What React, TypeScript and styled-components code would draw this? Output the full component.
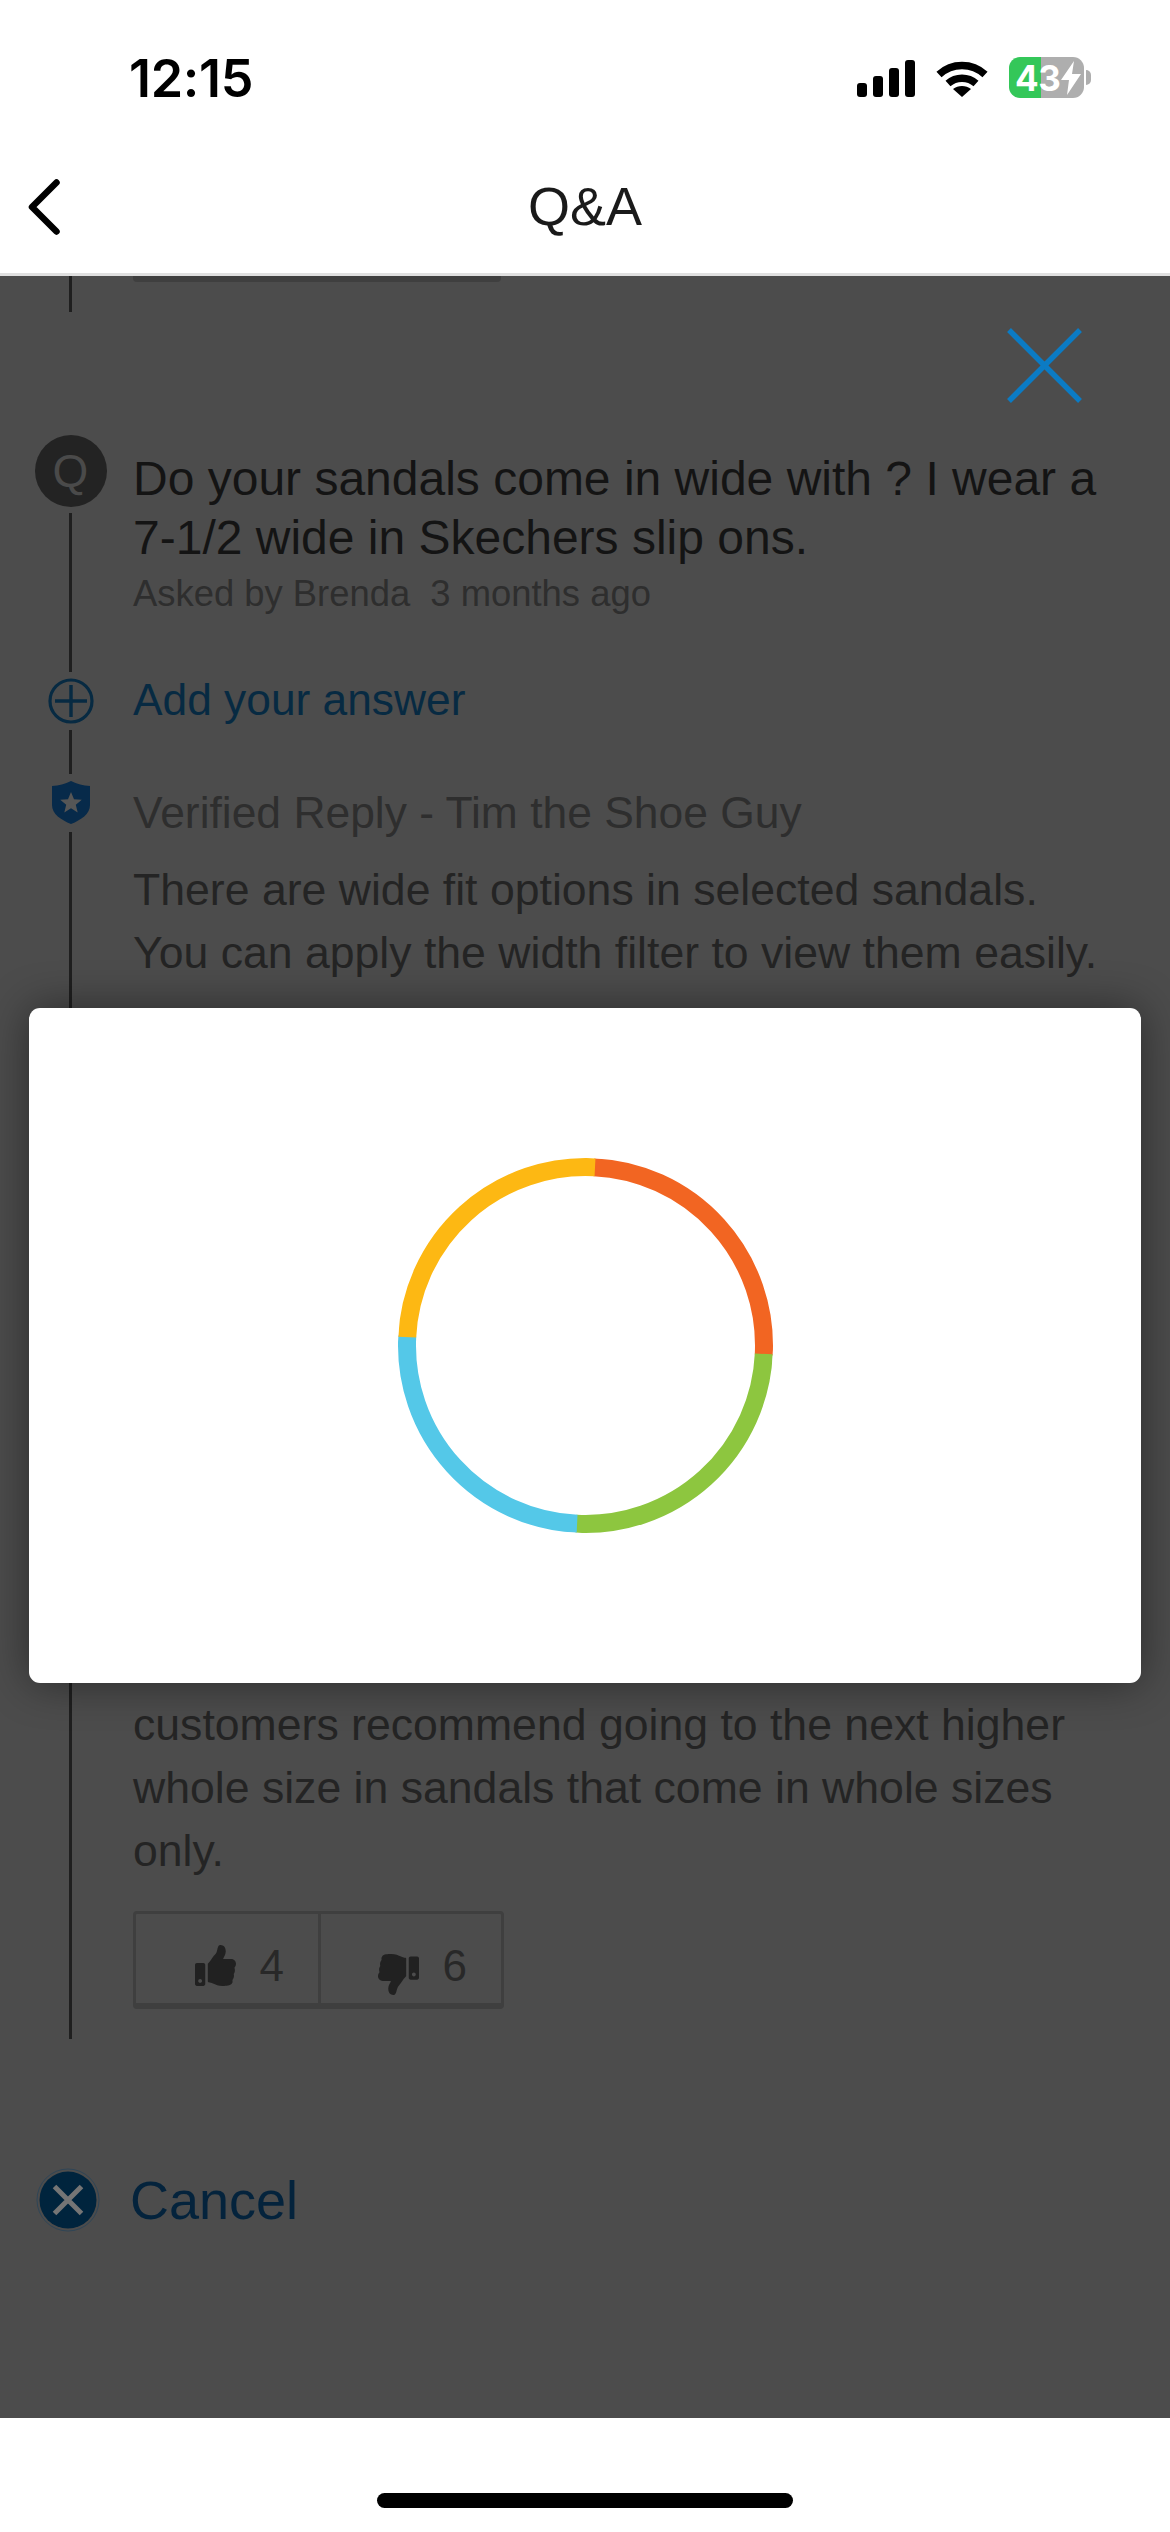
import React from 'react'
import styled, { createGlobalStyle } from 'styled-components'
import { FaThumbsUp, FaThumbsDown } from 'react-icons/fa'

const GlobalStyle = createGlobalStyle`
	html, body {
		margin: 0;
		padding: 0;
		background: white;
	}
	* {
		box-sizing: border-box;
	}
`

const Screen = styled.div`
	width: 1170px;
	height: 2532px;
	display: flex;
	flex-direction: column;
	overflow: hidden;
	font-family: "Liberation Sans", Arial, sans-serif;
`

const StatusBar = styled.div`
	height: 150px;
	padding: 57px 86px 0 129px;
	display: flex;
	justify-content: space-between;
	align-items: flex-start;
	background: white;
`

const Clock = styled.div`
	font-family: Inter, sans-serif;
	font-size: 52px;
	line-height: 44px;
	font-weight: 600;
	letter-spacing: -0.3px;
	color: black;
`

const StatusIcons = styled.div`
	display: flex;
	align-items: center;
	gap: 21px;
`

const Signal = styled.div`
	display: flex;
	align-items: flex-end;
	gap: 6px;
	height: 37px;
	margin-top: 2px;
`

const SignalBar = styled.span<{ $height: number }>`
	width: 10px;
	height: ${p => p.$height}px;
	border-radius: 3px;
	background: black;
`

const Battery = styled.div`
	position: relative;
	width: 75px;
	height: 41px;
	border-radius: 11px;
	background: linear-gradient(90deg, #34c759 0 32px, #aeaeae 32px);
	display: flex;
	align-items: center;
	padding-left: 6px;
	color: white;
	font-family: Inter, sans-serif;
	font-weight: 700;
	font-size: 35px;
	letter-spacing: -0.5px;

	&::after {
		content: '';
		position: absolute;
		left: 77px;
		top: 13px;
		width: 5px;
		height: 15px;
		border-radius: 0 5px 5px 0;
		background: #aeaeae;
	}
`

const NavBar = styled.div`
	position: relative;
	height: 126px;
	display: flex;
	align-items: flex-start;
	justify-content: center;
	padding-top: 25px;
	background: white;
	border-bottom: 3px solid #e0e0e0;
`

const NavTitle = styled.div`
	font-size: 54px;
	line-height: 62px;
	color: #1a1a1a;
`

const BackButton = styled.svg`
	position: absolute;
	left: 24px;
	top: 27px;
`

const Panel = styled.div`
	position: relative;
	height: 2142px;
	background: #4c4c4c;
`

const Row = styled.div<{ $top?: number }>`
	display: flex;
	margin-top: ${p => p.$top ?? 0}px;
`

const Rail = styled.div<{ $height?: number }>`
	flex: none;
	width: 133px;
	padding-left: 8px;
	display: flex;
	flex-direction: column;
	align-items: center;
	height: ${p => (p.$height ? `${p.$height}px` : 'auto')};
`

const RailLine = styled.div<{ $gap?: number }>`
	flex: 1;
	width: 2.5px;
	margin-top: ${p => p.$gap ?? 0}px;
	background: #1f1f1f;
`

const QuestionBadge = styled.div`
	flex: none;
	width: 72px;
	height: 72px;
	border-radius: 50%;
	background: #232323;
	color: #4a4a4a;
	font-size: 46px;
	line-height: 72px;
	text-align: center;
`

const Copy = styled.div<{ $top?: number }>`
	flex: 1;
	padding-top: ${p => p.$top ?? 0}px;
`

const Question = styled.div`
	font-size: 48px;
	line-height: 59px;
	color: #141414;
	white-space: pre;
`

const Meta = styled.div`
	margin-top: 5px;
	font-size: 36.4px;
	line-height: 44px;
	color: #2e2e2e;
	white-space: pre;
`

const AddLink = styled.div`
	margin-top: -3px;
	font-size: 44.3px;
	line-height: 50px;
	color: #072a42;
`

const ReplyAuthor = styled.div`
	font-size: 44.4px;
	line-height: 50px;
	color: #2e2e2e;
`

const Answer = styled.p<{ $top?: number }>`
	margin: ${p => p.$top ?? 0}px 0 0;
	font-size: 44.6px;
	line-height: 63px;
	color: #242424;
	white-space: pre;
`

const Votes = styled.div`
	display: flex;
	width: 371px;
	height: 98px;
	margin-top: 29px;
	margin-bottom: 30px;
	border: 3px solid #3f3f3f;
	border-bottom-width: 6px;
	border-radius: 4px;
`

const VoteButton = styled.div<{ $divided?: boolean; $width: number }>`
	flex: none;
	width: ${p => p.$width}px;
	display: flex;
	justify-content: flex-end;
	align-items: center;
	gap: 24px;
	padding-right: 34px;
	padding-top: 14px;
	border-right: ${p => (p.$divided ? '3px solid #3f3f3f' : 'none')};
	color: #282828;
	font-size: 44px;

	svg {
		width: 41px;
		height: 41px;
		color: #212121;
	}
`

const ThumbSlot = styled.span<{ $shift: number; $flip?: boolean }>`
	display: flex;
	margin-top: ${p => p.$shift}px;
	transform: ${p => (p.$flip ? 'scaleX(-1)' : 'none')};
`

const PriorVotes = styled.div`
	flex: none;
	width: 368px;
	height: 6px;
	border-radius: 0 0 4px 4px;
	background: #3f3f3f;
`

const CancelRow = styled.div`
	display: flex;
	align-items: center;
	gap: 30px;
	margin-top: 130px;
	padding-left: 36px;
	height: 62px;
`

const CancelLabel = styled.div`
	font-size: 54px;
	line-height: 62px;
	color: #04233c;
`

const CloseButton = styled.svg`
	position: absolute;
	left: 1007px;
	top: 52px;
`

const Modal = styled.div`
	position: absolute;
	left: 29px;
	top: 732px;
	width: 1112px;
	height: 675px;
	display: flex;
	align-items: center;
	justify-content: center;
	background: white;
	border-radius: 11px;
	box-shadow: 0 0 44px rgba(0, 0, 0, 0.45);
`

const Spinner = styled.svg`
	transform: rotate(-87.3deg);
`

const HomeBar = styled.div`
	flex: 1;
	display: flex;
	justify-content: center;
	padding-top: 75px;
	background: white;
`

const HomeIndicator = styled.div`
	width: 416px;
	height: 15px;
	border-radius: 8px;
	background: black;
`

const spinnerColors = ['#f26522', '#8dc63f', '#54c8e8', '#fdb813']

export default function App() {
	return (
		<Screen>
			<GlobalStyle />

			<StatusBar>
				<Clock>12:15</Clock>
				<StatusIcons>
					<Signal>
						{[14, 21, 29, 37].map(height => (
							<SignalBar key={height} $height={height} />
						))}
					</Signal>
					<svg width="52" height="38" viewBox="0 0 52 38">
						<path d="M3 15.5C16 3.5 36 3.5 49 15.5" fill="none" stroke="black" strokeWidth="7.5" />
						<path d="M12 24.5C20 17.5 32 17.5 40 24.5" fill="none" stroke="black" strokeWidth="7.5" />
						<path d="M26 38L17 30C22 26 30 26 35 30Z" fill="black" />
					</svg>
					<Battery>
						43
						<svg width="22" height="34" viewBox="0 0 22 34">
							<path d="M14 0L1 19H9L7 34L21 13H12Z" fill="white" />
						</svg>
					</Battery>
				</StatusIcons>
			</StatusBar>

			<NavBar>
				<BackButton width="38" height="60" viewBox="0 0 38 60">
					<path d="M32.5 5.500L8 30L32.500 54.500" fill="none" stroke="black" strokeWidth="6.5" strokeLinecap="round" strokeLinejoin="round" />
				</BackButton>
				<NavTitle>Q&amp;A</NavTitle>
			</NavBar>

			<Panel>
				<Row>
					<Rail $height={36}>
						<RailLine />
					</Rail>
					<PriorVotes />
				</Row>

				<Row $top={123}>
					<Rail $height={237}>
						<QuestionBadge>Q</QuestionBadge>
						<RailLine $gap={6} />
					</Rail>
					<Copy $top={14}>
						<Question>Do your sandals come in wide with ? I wear a{'\n'}7-1/2 wide in Skechers slip ons.</Question>
						<Meta>Asked by Brenda  3 months ago</Meta>
					</Copy>
				</Row>

				<Row $top={6}>
					<Rail $height={96}>
						<svg width="46" height="46" viewBox="0 0 46 46">
							<circle cx="23" cy="23" r="21" fill="none" stroke="#072a42" strokeWidth="3.2" />
							<path d="M7 23H39M23 7V39" stroke="#072a42" strokeWidth="3.4" />
						</svg>
						<RailLine $gap={6} />
					</Rail>
					<Copy>
						<AddLink>Add your answer</AddLink>
					</Copy>
				</Row>

				<Row $top={7}>
					<Rail>
						<svg width="38" height="43" viewBox="0 0 38 43">
							<path d="M19 0C25 3 31 4.500 38 5V24C38 33 29 39 19 43C9 39 0 33 0 24V5C7 4.500 13 3 19 0Z" fill="#072a4a" />
							<path d="M19 11L22 18.200L29.800 18.800L23.800 23.800L25.700 31.400L19 27.300L12.300 31.400L14.200 23.800L8.200 18.800L16 18.200Z" fill="#565656" />
						</svg>
						<RailLine $gap={8} />
					</Rail>
					<Copy $top={7}>
						<ReplyAuthor>Verified Reply - Tim the Shoe Guy</ReplyAuthor>
						<Answer $top={20}>There are wide fit options in selected sandals.{'\n'}You can apply the width filter to view them easily.</Answer>
						<Answer $top={709}>customers recommend going to the next higher{'\n'}whole size in sandals that come in whole sizes{'\n'}only.</Answer>
						<Votes>
							<VoteButton $divided $width={185}>
								<ThumbSlot $shift={0}><FaThumbsUp /></ThumbSlot>
								<span>4</span>
							</VoteButton>
							<VoteButton $width={180}>
								<ThumbSlot $shift={18} $flip><FaThumbsDown /></ThumbSlot>
								<span>6</span>
							</VoteButton>
						</Votes>
					</Copy>
				</Row>

				<CancelRow>
					<svg width="64" height="64" viewBox="0 0 64 64">
						<circle cx="32" cy="32" r="31" fill="none" stroke="#2f4556" strokeWidth="1" />
						<circle cx="32" cy="32" r="28.500" fill="#00243d" />
						<path d="M18.500 18.500L45.500 45.500M45.500 18.500L18.500 45.500" stroke="#757575" strokeWidth="5" />
					</svg>
					<CancelLabel>Cancel</CancelLabel>
				</CancelRow>

				<CloseButton width="75" height="75" viewBox="0 0 75 75">
					<path d="M2 2L73 73M73 2L2 73" stroke="#0b7bc4" strokeWidth="5.5" />
				</CloseButton>

				<Modal>
					<Spinner width="375" height="375" viewBox="0 0 375 375">
						{spinnerColors.map((color, i) => (
							<circle
								key={color}
								cx="187.5"
								cy="187.5"
								r="178.500"
								fill="none"
								stroke={color}
								strokeWidth="18"
								pathLength={4}
								strokeDasharray="1.004 2.996"
								strokeDashoffset={-i}
							/>
						))}
					</Spinner>
				</Modal>
			</Panel>

			<HomeBar>
				<HomeIndicator />
			</HomeBar>
		</Screen>
	)
}
